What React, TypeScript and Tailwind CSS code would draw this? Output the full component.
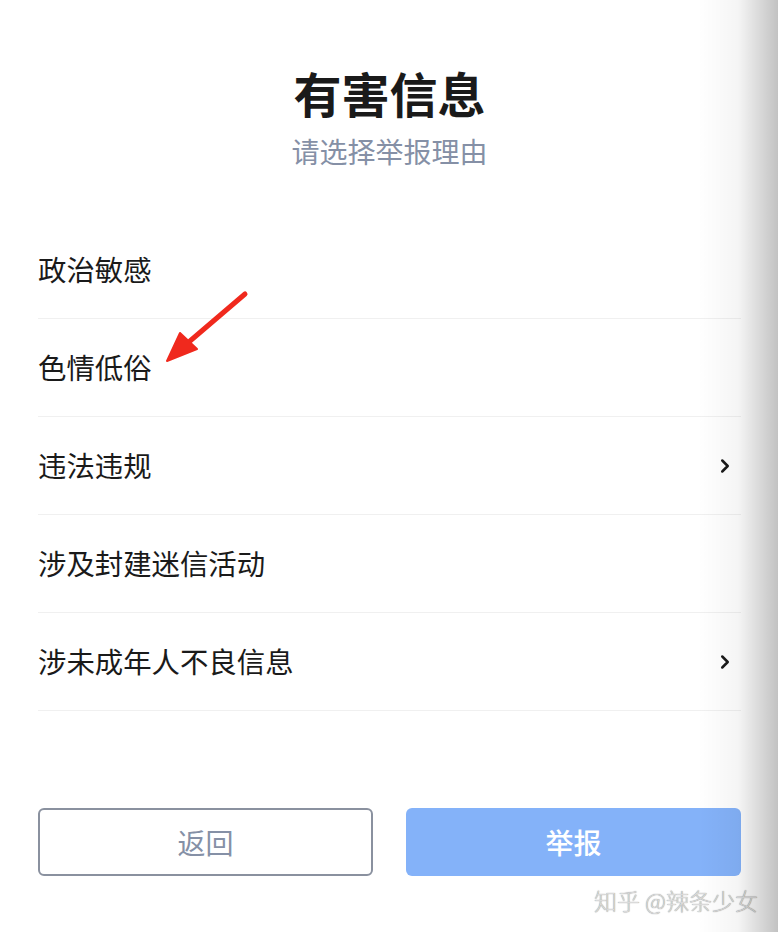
import { ChevronRight } from "lucide-react";

type Reason = {
  label: string;
  hasChildren?: boolean;
};

const reasons: Reason[] = [
  { label: "政治敏感" },
  { label: "色情低俗" },
  { label: "违法违规", hasChildren: true },
  { label: "涉及封建迷信活动" },
  { label: "涉未成年人不良信息", hasChildren: true },
];

const ReasonRow = ({ reason }: { reason: Reason }) => (
  <div className="flex h-[98px] items-center justify-between border-b border-[#f0f0f0]">
    <span className="text-[28.4px] leading-none text-[#1a1a1a]">{reason.label}</span>
    {reason.hasChildren && (
      <ChevronRight className="mr-[5px] h-[22px] w-[22px] text-[#1a1a1a]" strokeWidth={2.7} />
    )}
  </div>
);

// hand-drawn red arrow pointing at the second row
const Arrow = () => (
  <svg
    className="pointer-events-none absolute left-[160px] top-[285px]"
    width="95"
    height="85"
    viewBox="0 0 95 85"
  >
    <path d="M85 9 L30 56" stroke="#f0291d" strokeWidth="5" strokeLinecap="round" fill="none" />
    <path d="M7 76 L20 48 L37 64 Z" fill="#f0291d" stroke="#f0291d" strokeWidth="2" strokeLinejoin="round" />
  </svg>
);

const App = () => {
  return (
    <div className="relative h-[932px] w-[778px] overflow-hidden bg-white font-['Noto_Sans_CJK_SC','Noto_Sans',sans-serif]">
      <div className="pl-[38px] pr-[37px]">
        <div className="flex flex-col items-center pt-[64px]">
          <h1 className="text-[48px] font-bold leading-[56px] text-[#1a1a1a]">有害信息</h1>
          <p className="mt-[13px] text-[28px] leading-[36px] text-[#8590a6]">请选择举报理由</p>
        </div>

        <div className="mt-[52px]">
          {reasons.map((reason) => (
            <ReasonRow key={reason.label} reason={reason} />
          ))}
        </div>

        <div className="mt-[97px] flex justify-between">
          <button className="h-[68px] w-[335px] rounded-[6px] border-2 border-[#8a919f] bg-white text-[28px] text-[#8590a6]">
            返回
          </button>
          <button className="h-[68px] w-[335px] rounded-[6px] bg-[#84b2f9] text-[28px] font-medium text-white">
            举报
          </button>
        </div>

        <div className="mt-[13px] flex justify-end">
          <span className="mr-[-17px] text-[23px] font-light leading-none text-[#dadada] [text-shadow:0_0_1px_#777]">
            知乎 @辣条少女
          </span>
        </div>
      </div>

      <Arrow />

      {/* page edge shadow */}
      <div className="pointer-events-none absolute right-0 top-0 h-full w-[80px] bg-gradient-to-r from-transparent via-black/[0.04] to-black/[0.24]" />
    </div>
  );
};

export default App;
